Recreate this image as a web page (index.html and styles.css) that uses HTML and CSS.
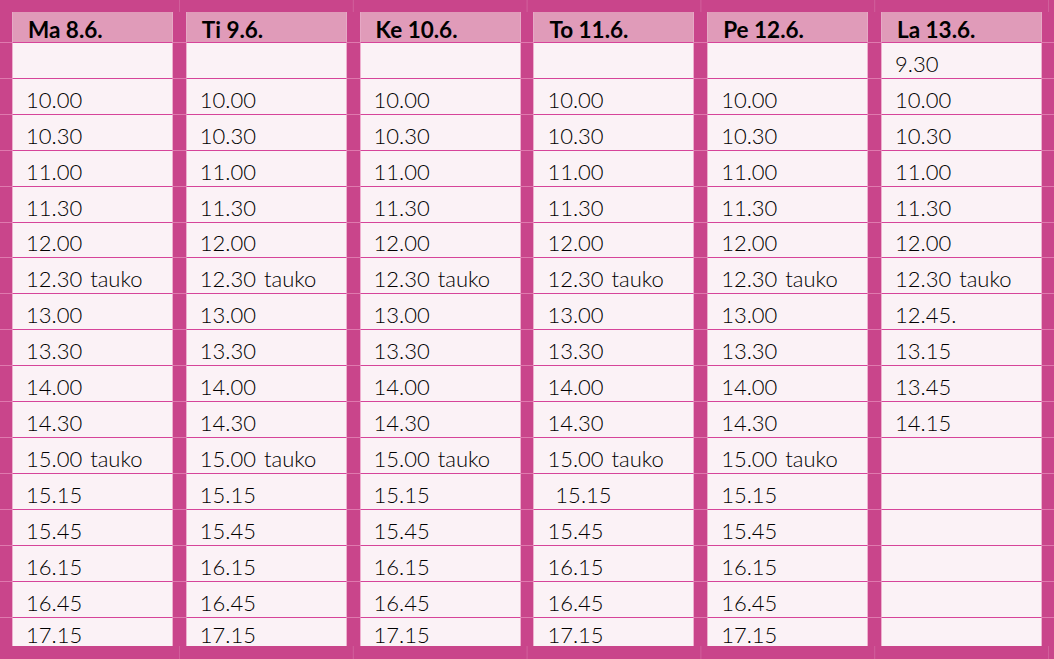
FILE: index.html
```html
<!DOCTYPE html>
<html lang="fi">
<head>
<meta charset="utf-8">
<title>Aikataulu</title>
<link rel="stylesheet" href="styles.css">
</head>
<body>
<div class="schedule">
  <div class="band band-top"></div>
  <div class="row head">
    <div class="cell">Ma 8.6.</div><div class="cell">Ti 9.6.</div><div class="cell">Ke 10.6.</div><div class="cell">To 11.6.</div><div class="cell">Pe 12.6.</div><div class="cell">La 13.6.</div>
  </div>
  <div class="row"><div class="cell"></div><div class="cell"></div><div class="cell"></div><div class="cell"></div><div class="cell"></div><div class="cell">9.30</div></div>
  <div class="row"><div class="cell">10.00</div><div class="cell">10.00</div><div class="cell">10.00</div><div class="cell">10.00</div><div class="cell">10.00</div><div class="cell">10.00</div></div>
  <div class="row"><div class="cell">10.30</div><div class="cell">10.30</div><div class="cell">10.30</div><div class="cell">10.30</div><div class="cell">10.30</div><div class="cell">10.30</div></div>
  <div class="row"><div class="cell">11.00</div><div class="cell">11.00</div><div class="cell">11.00</div><div class="cell">11.00</div><div class="cell">11.00</div><div class="cell">11.00</div></div>
  <div class="row"><div class="cell">11.30</div><div class="cell">11.30</div><div class="cell">11.30</div><div class="cell">11.30</div><div class="cell">11.30</div><div class="cell">11.30</div></div>
  <div class="row"><div class="cell">12.00</div><div class="cell">12.00</div><div class="cell">12.00</div><div class="cell">12.00</div><div class="cell">12.00</div><div class="cell">12.00</div></div>
  <div class="row"><div class="cell">12.30 tauko</div><div class="cell">12.30 tauko</div><div class="cell">12.30 tauko</div><div class="cell">12.30 tauko</div><div class="cell">12.30 tauko</div><div class="cell">12.30 tauko</div></div>
  <div class="row"><div class="cell">13.00</div><div class="cell">13.00</div><div class="cell">13.00</div><div class="cell">13.00</div><div class="cell">13.00</div><div class="cell">12.45.</div></div>
  <div class="row"><div class="cell">13.30</div><div class="cell">13.30</div><div class="cell">13.30</div><div class="cell">13.30</div><div class="cell">13.30</div><div class="cell">13.15</div></div>
  <div class="row"><div class="cell">14.00</div><div class="cell">14.00</div><div class="cell">14.00</div><div class="cell">14.00</div><div class="cell">14.00</div><div class="cell">13.45</div></div>
  <div class="row"><div class="cell">14.30</div><div class="cell">14.30</div><div class="cell">14.30</div><div class="cell">14.30</div><div class="cell">14.30</div><div class="cell">14.15</div></div>
  <div class="row"><div class="cell">15.00 tauko</div><div class="cell">15.00 tauko</div><div class="cell">15.00 tauko</div><div class="cell">15.00 tauko</div><div class="cell">15.00 tauko</div><div class="cell"></div></div>
  <div class="row"><div class="cell">15.15</div><div class="cell">15.15</div><div class="cell">15.15</div><div class="cell">&nbsp;15.15</div><div class="cell">15.15</div><div class="cell"></div></div>
  <div class="row"><div class="cell">15.45</div><div class="cell">15.45</div><div class="cell">15.45</div><div class="cell">15.45</div><div class="cell">15.45</div><div class="cell"></div></div>
  <div class="row"><div class="cell">16.15</div><div class="cell">16.15</div><div class="cell">16.15</div><div class="cell">16.15</div><div class="cell">16.15</div><div class="cell"></div></div>
  <div class="row"><div class="cell">16.45</div><div class="cell">16.45</div><div class="cell">16.45</div><div class="cell">16.45</div><div class="cell">16.45</div><div class="cell"></div></div>
  <div class="row last"><div class="cell">17.15</div><div class="cell">17.15</div><div class="cell">17.15</div><div class="cell">17.15</div><div class="cell">17.15</div><div class="cell"></div></div>
  <div class="band band-bottom"></div>
</div>
</body>
</html>
```

FILE: styles.css
```css
html, body {
  margin: 0;
  padding: 0;
}

body {
  background: #c9458b;
  font-family: Lato, "Liberation Sans", sans-serif;
  color: #000;
  width: 1054px;
  height: 659px;
  overflow: hidden;
}

.schedule {
  display: flex;
  flex-direction: column;
  width: 1054px;
}

.band {
  padding-left: 179px;
  background-image: linear-gradient(to right, rgba(255, 255, 255, 0.14) 0 1px, transparent 1px);
  background-size: 173.8px 100%;
  background-repeat: repeat-x;
  background-origin: content-box;
  background-clip: content-box;
}

.band-top {
  height: 12px;
}

.band-bottom {
  height: 13px;
}

.row {
  box-sizing: border-box;
  height: 35.92px;
  padding: 0 12px;
  border-top: 1px solid #df79ae;
  display: grid;
  grid-template-columns: repeat(6, 1fr);
  column-gap: 12.8px;
  font-size: 22px;
  font-weight: 300;
  line-height: 22px;
  word-spacing: 2px;
}

.cell {
  box-sizing: border-box;
  margin-top: -1px;
  border-top: 1px solid #d6449a;
  border-left: 1px solid #eeb0cf;
  border-right: 1px solid #eeb0cf;
  background: #fbf2f6;
  padding: 0 6px 3px 13px;
  display: flex;
  align-items: flex-end;
  white-space: nowrap;
}

.row.head {
  height: 30px;
  border-top: 0;
}

.row.head .cell {
  margin-top: 0;
  border-top: 0;
  border-left-color: #e6a8c5;
  border-right-color: #e6a8c5;
  background: #e09bb9;
  font-weight: 700;
  font-size: 22.5px;
  word-spacing: 0;
  padding: 0 6px 1px 15px;
}

.row.last {
  height: 29.3px;
}

.row.last .cell {
  padding-bottom: 0;
}
```
